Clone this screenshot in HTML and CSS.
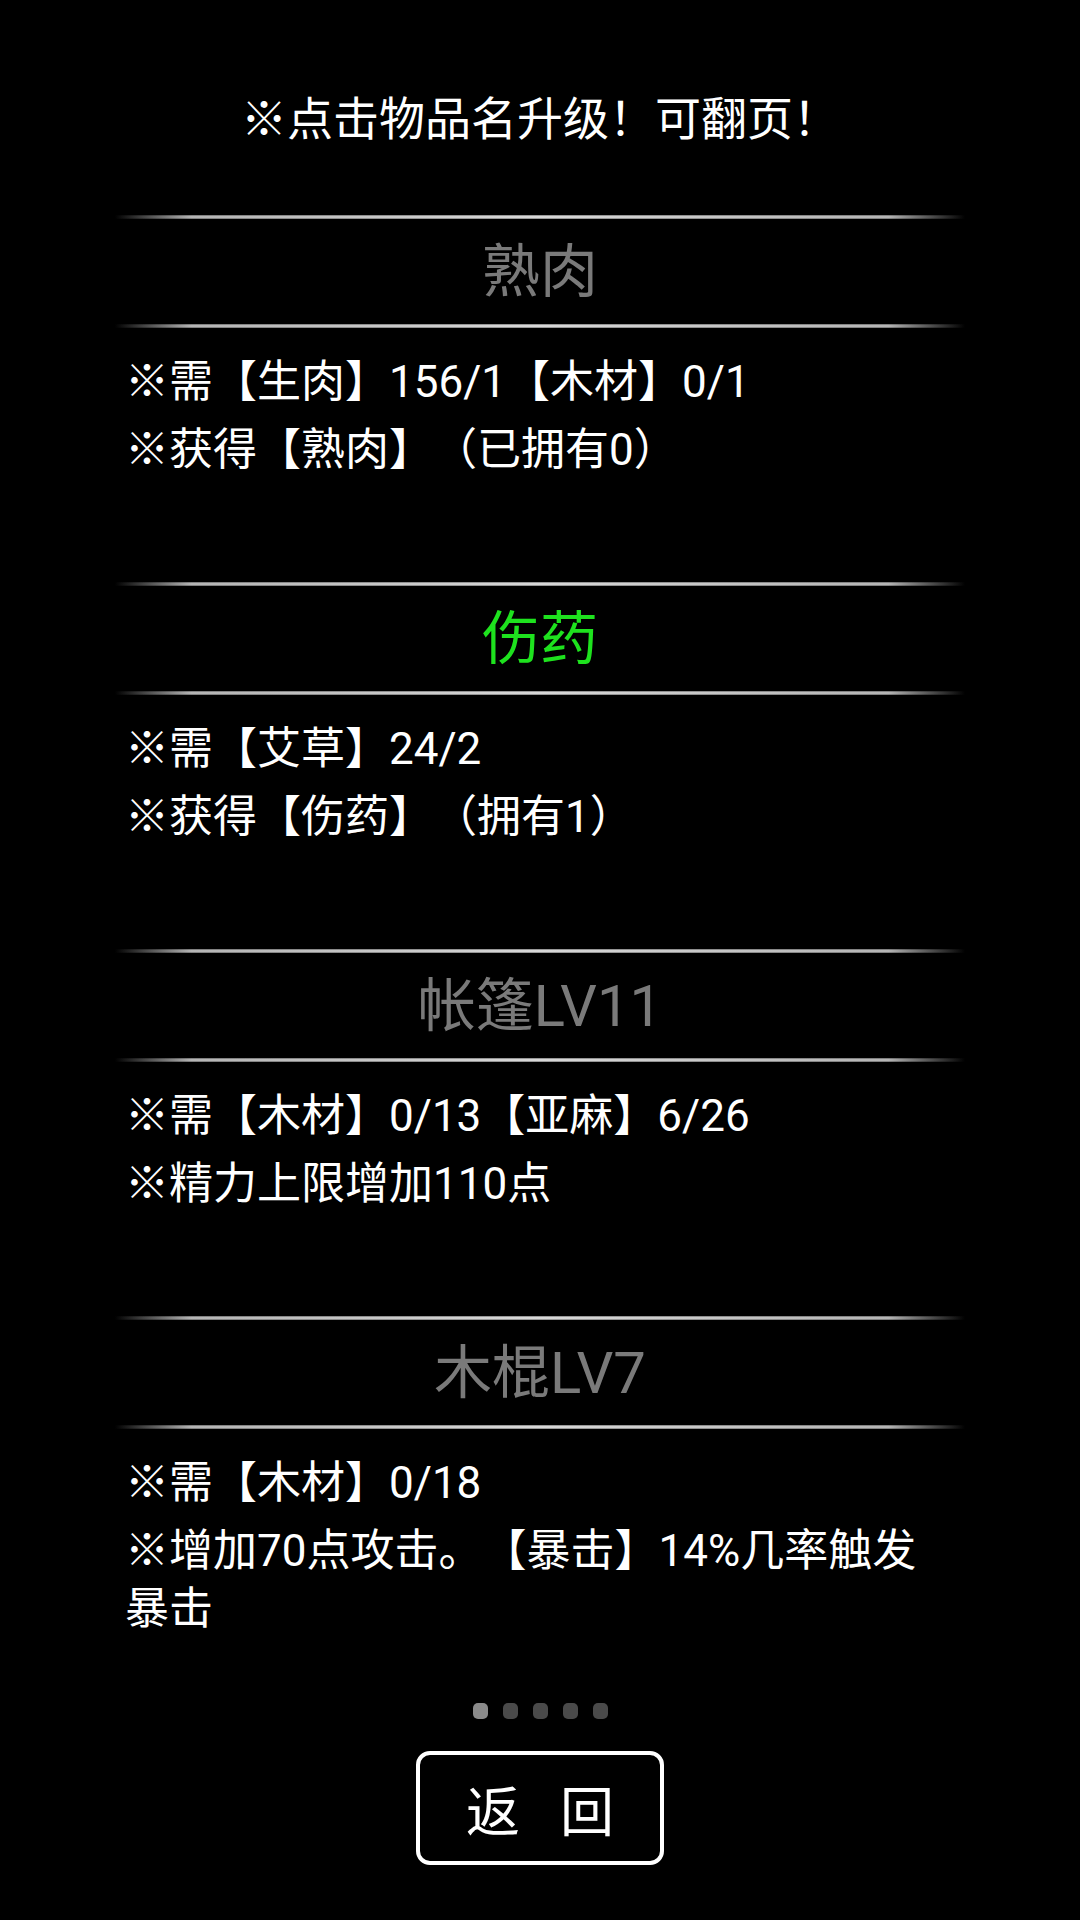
FILE: index.html
```html
<!DOCTYPE html>
<html lang="zh-CN">
<head>
<meta charset="utf-8">
<title>升级</title>
<link rel="stylesheet" href="styles.css">
</head>
<body>
<div class="page">
  <div class="tip">※点击物品名升级！可翻页！</div>
  <div class="list">
    <section class="item">
      <div class="head">
        <div class="rule"></div>
        <div class="name">熟肉</div>
        <div class="rule"></div>
      </div>
      <div class="desc">
        <p class="line">※需【生肉】156/1【木材】0/1</p>
        <p class="line">※获得【熟肉】（已拥有0）</p>
      </div>
    </section>
    <section class="item">
      <div class="head">
        <div class="rule"></div>
        <div class="name green">伤药</div>
        <div class="rule"></div>
      </div>
      <div class="desc">
        <p class="line">※需【艾草】24/2</p>
        <p class="line">※获得【伤药】（拥有1）</p>
      </div>
    </section>
    <section class="item">
      <div class="head">
        <div class="rule"></div>
        <div class="name">帐篷LV11</div>
        <div class="rule"></div>
      </div>
      <div class="desc">
        <p class="line">※需【木材】0/13【亚麻】6/26</p>
        <p class="line">※精力上限增加110点</p>
      </div>
    </section>
    <section class="item">
      <div class="head">
        <div class="rule"></div>
        <div class="name">木棍LV7</div>
        <div class="rule"></div>
      </div>
      <div class="desc">
        <p class="line">※需【木材】0/18</p>
        <p class="line">※增加70点攻击。【暴击】14%几率触发暴击</p>
      </div>
    </section>
  </div>
  <div class="pager">
    <span class="dot active"></span>
    <span class="dot"></span>
    <span class="dot"></span>
    <span class="dot"></span>
    <span class="dot"></span>
  </div>
  <div class="back"><span>返</span><span>回</span></div>
</div>
</body>
</html>
```
FILE: styles.css
```css
html, body {
  margin: 0;
  padding: 0;
  background: #000;
}
body {
  width: 1080px;
  height: 1920px;
  overflow: hidden;
  font-family: Roboto, "Noto Sans CJK SC", sans-serif;
  color: #fff;
  text-spacing-trim: space-all;
}
.page {
  display: flex;
  flex-direction: column;
  align-items: center;
}
.tip {
  box-sizing: border-box;
  height: 215px;
  padding-top: 89px;
  font-size: 46px;
  line-height: 60px;
  text-align: center;
}
.list {
  width: 850px;
  display: flex;
  flex-direction: column;
}
.item {
  height: 367px;
}
.head {
  display: flex;
  flex-direction: column;
}
.rule {
  height: 4px;
  background:
    linear-gradient(to bottom, rgba(0,0,0,0.45), rgba(0,0,0,0) 35%, rgba(0,0,0,0) 65%, rgba(0,0,0,0.45)),
    linear-gradient(to right, rgba(200,200,200,0) 0%, rgba(200,200,200,0.9) 9%, #d8d8d8 50%, rgba(200,200,200,0.9) 91%, rgba(200,200,200,0) 100%);
}
.name {
  box-sizing: border-box;
  height: 105px;
  padding-bottom: 10px;
  display: flex;
  align-items: center;
  justify-content: center;
  font-size: 58px;
  color: #7a7a7a;
}
.name.green {
  color: #1ee21e;
}
.desc {
  padding: 25px 30px 0 10px;
  display: flex;
  flex-direction: column;
  gap: 10px;
}
.line {
  margin: 0;
  font-size: 44px;
  line-height: 58px;
}
.pager {
  margin-top: 20px;
  height: 16px;
  display: flex;
  gap: 15px;
}
.dot {
  width: 15px;
  height: 16px;
  border-radius: 5px;
  background: #4a4a4a;
}
.dot.active {
  background: #8a8a8a;
}
.back {
  margin-top: 32px;
  box-sizing: border-box;
  width: 248px;
  height: 114px;
  border: 4px solid #fff;
  border-radius: 14px;
  display: flex;
  align-items: center;
  justify-content: center;
  gap: 40px;
  font-size: 54px;
  color: #fff;
}
```
